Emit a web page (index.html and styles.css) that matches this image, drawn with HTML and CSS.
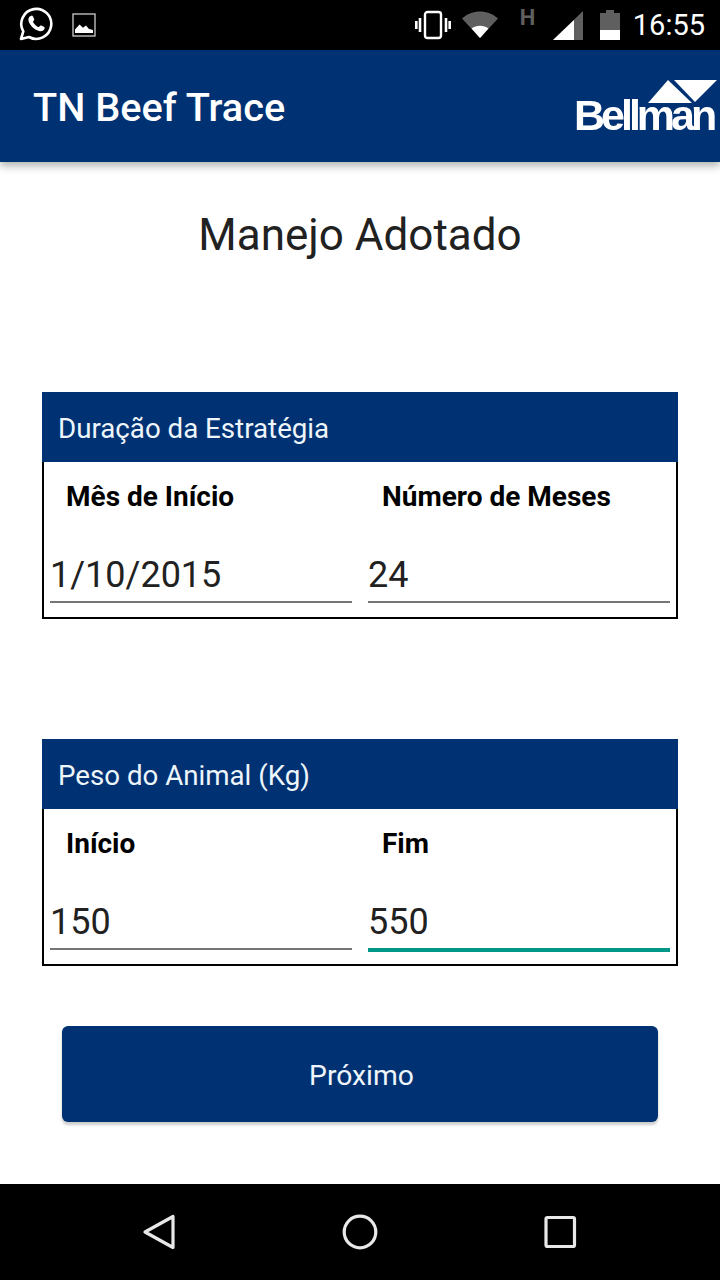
FILE: index.html
```html
<!DOCTYPE html>
<html lang="pt">
<head>
<meta charset="utf-8">
<title>TN Beef Trace</title>
<link rel="stylesheet" href="styles.css">
</head>
<body>
<div class="screen">
  <header class="status">
    <div class="status-left">
      <svg class="i-wa" viewBox="0 0 34 34"><path d="M2 32l2.300-7.600A15 15 0 1 1 10 30z" fill="none" stroke="#fff" stroke-width="2.600" stroke-linejoin="round"/><path d="M11.500 9.200c1-.9 2-.8 2.500.2l1.200 2.600c.3.700 0 1.200-.9 2.200-.4.400-.4.800 0 1.400 1.200 1.900 2.700 3.300 4.600 4.300.6.300 1 .2 1.400-.3.900-1.100 1.300-1.400 2-1.100l2.600 1.300c.9.500 1 1.300.5 2.300-1 1.900-3.200 2.600-5.300 2-5.300-1.500-9.400-5.800-10.600-10.300-.5-2 .4-3.600 1.500-4.600z" fill="#fff"/></svg>
      <svg class="i-img" viewBox="0 0 24 24"><rect x="1" y="1" width="22" height="22" fill="none" stroke="#ccc" stroke-width="1.300"/><path d="M3 20v-3.500l4.500-5 3.500 3.200 3-2.200 3 3.500 4 1V20z" fill="#fff"/></svg>
    </div>
    <div class="status-right">
      <svg class="i-vib" viewBox="0 0 36 30"><rect x="10" y="2" width="16" height="26" rx="2.500" fill="none" stroke="#fff" stroke-width="2.400"/><path d="M5 8v14M1.300 11v8M31 8v14M34.700 11v8" stroke="#fff" stroke-width="2.600"/></svg>
      <svg class="i-wifi" viewBox="0 0 36 30"><path d="M0 8.500C10-1 26-1 36 8.500L18 28z" fill="#5f5f5f"/><path d="M9.500 18.500c5-3.800 12-3.800 17 0L18 28z" fill="#fff"/></svg>
      <span class="net">H</span>
      <svg class="i-sig" viewBox="0 0 30 30"><path d="M30 1V30H0z" fill="#5f5f5f"/><path d="M21 10V30H0z" fill="#fff"/></svg>
      <svg class="i-bat" viewBox="0 0 20 30"><path d="M0 3h6V0h8v3h6v27H0z" fill="#5f5f5f"/><rect y="20" width="20" height="10" fill="#fff"/></svg>
      <span class="clock">16:55</span>
    </div>
  </header>

  <div class="appbar">
    <h1 class="app-title">TN Beef Trace</h1>
    <div class="logo">
      <svg class="logo-mark" viewBox="0 0 69 23"><path d="M0 23L20 0 44 23z" fill="#fff"/><path d="M26 0H69L47 22z" fill="#fff"/></svg>
      <span class="logo-text">Bellman</span>
    </div>
  </div>

  <main class="content">
    <h2 class="page-title">Manejo Adotado</h2>

    <section class="panel panel-first">
      <div class="panel-head">Duração da Estratégia</div>
      <div class="panel-body">
        <div class="field">
          <div class="field-label">Mês de Início</div>
          <div class="field-input">1/10/2015</div>
        </div>
        <div class="field">
          <div class="field-label">Número de Meses</div>
          <div class="field-input">24</div>
        </div>
      </div>
    </section>

    <section class="panel panel-second">
      <div class="panel-head">Peso do Animal (Kg)</div>
      <div class="panel-body">
        <div class="field">
          <div class="field-label">Início</div>
          <div class="field-input">150</div>
        </div>
        <div class="field">
          <div class="field-label">Fim</div>
          <div class="field-input is-focused">550</div>
        </div>
      </div>
    </section>

    <button class="next" type="button">Próximo</button>
  </main>

  <nav class="navbar">
    <svg class="nav-icon" viewBox="0 0 40 40"><path d="M33 4.500V35.500L5 20z" fill="none" stroke="#e8e8e8" stroke-width="3.200" stroke-linejoin="round"/></svg>
    <svg class="nav-icon" viewBox="0 0 40 40"><circle cx="20" cy="20" r="15.800" fill="none" stroke="#e8e8e8" stroke-width="3.200"/></svg>
    <svg class="nav-icon" viewBox="0 0 40 40"><rect x="6" y="5.500" width="28.500" height="29" rx="1.500" fill="none" stroke="#e8e8e8" stroke-width="3.200"/></svg>
  </nav>
</div>
</body>
</html>
```
FILE: styles.css
```css
* { box-sizing: border-box; }
html, body { margin: 0; padding: 0; }
body { width: 720px; height: 1280px; overflow: hidden; background: #fff; font-family: Roboto, "Liberation Sans", sans-serif; }
.screen { width: 720px; height: 1280px; display: flex; flex-direction: column; }

.status { height: 50px; background: #000; display: flex; justify-content: space-between; align-items: center; padding: 0 15px 0 19px; flex: none; }
.status-left, .status-right { display: flex; align-items: center; }
.i-wa { width: 34px; height: 34px; display: block; margin-bottom: 2px; }
.i-img { width: 24px; height: 24px; margin-left: 19px; display: block; }
.i-vib { width: 36px; height: 30px; display: block; }
.i-wifi { width: 36px; height: 30px; margin-left: 11px; display: block; }
.net { color: #5f5f5f; font-size: 22px; font-weight: 700; width: 18px; margin: 0 0 14px 22px; line-height: 22px; }
.i-sig { width: 30px; height: 30px; margin-left: 15px; display: block; }
.i-bat { width: 20px; height: 30px; margin-left: 17px; display: block; }
.clock { color: #fff; font-size: 29px; margin-left: 13px; line-height: 50px; }

.appbar { height: 112px; flex: none; background: #003273; box-shadow: 0 4px 8px rgba(0, 0, 0, .3); display: flex; justify-content: space-between; align-items: center; padding: 0 4px 0 33px; position: relative; }
.app-title { margin: 4px 0 0; color: #fff; font-size: 39.700px; font-weight: 500; line-height: 108px; }
.logo { width: 140px; height: 56px; position: relative; flex: none; }
.logo-mark { position: absolute; right: -1px; top: 2px; width: 69px; height: 23px; display: block; }
.logo-text { position: absolute; left: -2px; top: 12px; color: #fff; font-family: "Liberation Sans", sans-serif; font-weight: 700; font-size: 43px; letter-spacing: -4px; line-height: 50px; filter: blur(.6px); }

.content { flex: 1; display: flex; flex-direction: column; align-items: center; padding: 0 42px; }
.page-title { margin: 43px 0 0; height: 60px; font-size: 44px; font-weight: 400; line-height: 60px; color: #212121; }
.panel { width: 636px; border: 2px solid #000; flex: none; height: 227px; }
.panel-first { margin-top: 127px; }
.panel-second { margin-top: 120px; }
.panel-head { height: 70px; margin: -2px -2px 0; padding-left: 16px; box-sizing: content-box; background: #003273; color: #eef5fb; font-size: 27.700px; line-height: 74px; }
.panel-body { display: grid; grid-template-columns: 302px 302px; gap: 16px; padding: 0 6px; }
.field-label { padding-left: 16px; margin-top: 16px; font-size: 28px; font-weight: 700; line-height: 38px; color: #000; }
.field + .field .field-label { padding-left: 14px; }
.field-input { margin-top: 21px; height: 66px; padding-top: 17px; border-bottom: 2px solid #757575; font-size: 36px; line-height: 42px; color: #212121; }
.field-input.is-focused { border-bottom: 4px solid #009688; height: 68px; }

.next { width: 596px; height: 96px; flex: none; margin-top: 60px; padding: 2px 0 0 3px; background: #003273; border: 0; border-radius: 6px; box-shadow: 0 3px 3px rgba(0, 0, 0, .2); color: #eef5fb; font-family: Roboto, sans-serif; font-size: 28.300px; }

.navbar { height: 96px; flex: none; background: #000; display: flex; justify-content: space-between; padding: 0 140px; align-items: center; }
.nav-icon { width: 40px; height: 40px; display: block; }
```
